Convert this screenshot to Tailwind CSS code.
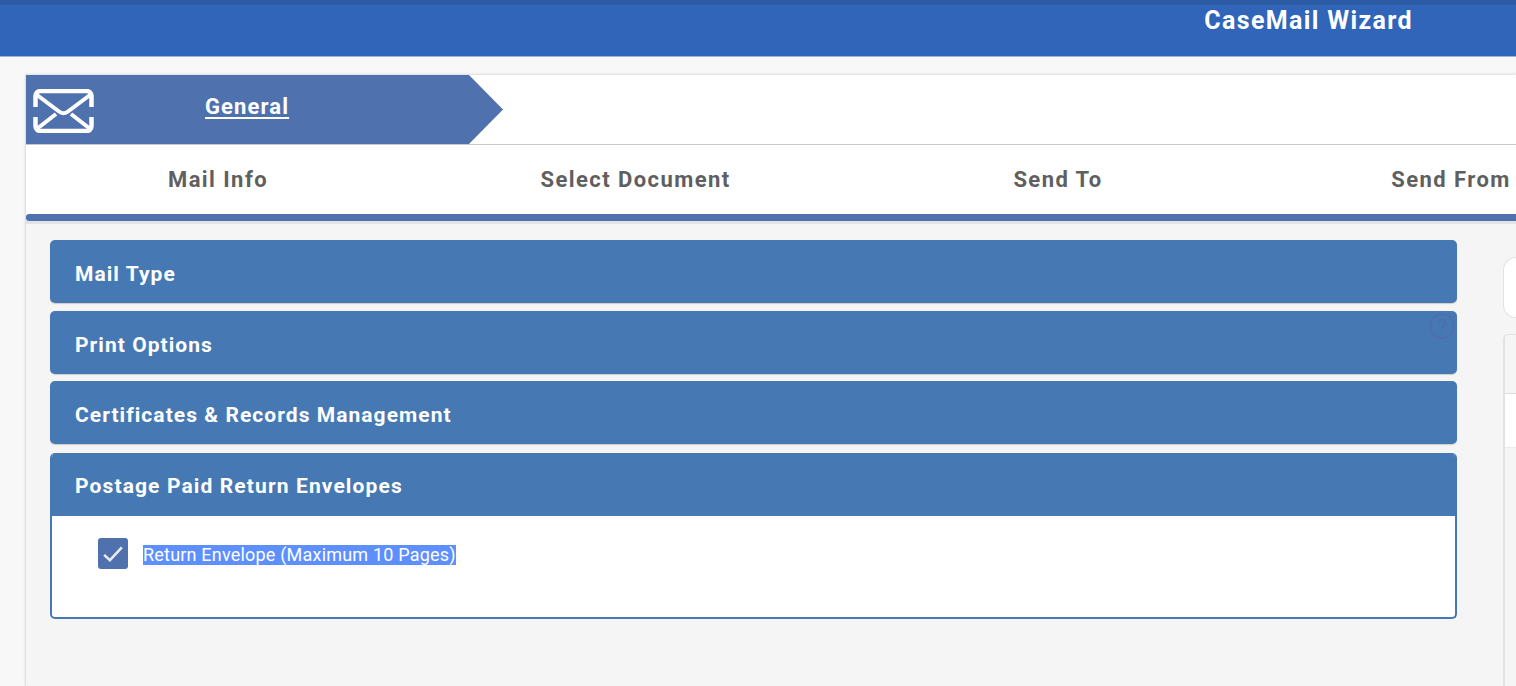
<!DOCTYPE html>
<html>
<head>
<meta charset="utf-8">
<script src="https://cdn.jsdelivr.net/npm/@tailwindcss/browser@4"></script>
</head>
<body class="h-[686px] w-[1516px] overflow-hidden bg-[#f8f8f8] font-['Roboto',sans-serif]">
<header class="h-[56px] border-t-[5px] border-[#2d5aa5] bg-[#3065ba] shadow-[0_1px_0_#9db6e0]">
  <div class="flex h-[51px] justify-end pr-[103px]">
    <span class="mt-[1px] text-[25px] leading-[30px] font-bold tracking-[1.35px] text-white">CaseMail Wizard</span>
  </div>
</header>
<main class="ml-[25px] mt-[19px] h-[611px] border-l border-[#e0e0e0] shadow-[0_-1px_2px_#dddddd]">
  <div class="h-[70px] border-b border-[#c8c8c8] bg-white">
    <div class="flex h-[69px] w-[477px] items-center bg-[#4f72ae] [clip-path:polygon(0_0,443px_0,477px_34.5px,443px_69px,0_69px)]">
      <svg class="ml-[7px] mt-[2px] h-[44px] w-[61px]" viewBox="0 0 61 44" fill="none" stroke="#fff" stroke-width="4.5">
        <path d="M2.5 18V7a5 5 0 0 1 5-5h46a5 5 0 0 1 5 5V18M2.5 28v9a5 5 0 0 0 5 5h46a5 5 0 0 0 5-5V28"/>
        <path d="M4 6 26 22.5a7 7 0 0 0 9 0L57 6M5 39 23 25M56 39 38 25" stroke-width="4"/>
      </svg>
      <a class="ml-[111px] mb-[6px] text-[22px] leading-[28px] font-bold tracking-[1.1px] text-white underline underline-offset-[3px]">General</a>
    </div>
  </div>
  <nav class="flex h-[69px] items-center overflow-hidden bg-white text-[22px] font-bold tracking-[1.43px] text-[#5f5f5f]">
    <div class="w-[384px] shrink-0 text-center">Mail Info</div>
    <div class="w-[451px] shrink-0 text-center">Select Document</div>
    <div class="w-[394px] shrink-0 text-center">Send To</div>
    <div class="w-[392px] shrink-0 text-center">Send From</div>
  </nav>
  <div class="h-[7px] rounded-l-[3px] bg-[#4f72ae]"></div>
  <section class="flex h-[465px] gap-[46px] overflow-hidden border-t-[3px] border-[#e3e3e3] bg-[#f5f5f5] pl-[24px] pt-[16px]">
    <div class="flex w-[1407px] shrink-0 flex-col">
      <div class="flex h-[63px] items-center rounded-[5px] bg-[#4679b3] pl-[25px] pt-[6px] text-[21px] font-bold tracking-[1.05px] text-white shadow-[0_1px_1px_#ccc]">Mail Type</div>
      <div class="mt-[8px] flex h-[63px] items-center rounded-[5px] bg-[#4679b3] pl-[25px] pt-[6px] text-[21px] font-bold tracking-[1.05px] text-white shadow-[0_1px_1px_#ccc]">Print Options</div>
      <div class="mt-[7px] flex h-[63px] items-center rounded-[5px] bg-[#4679b3] pl-[25px] pt-[6px] text-[21px] font-bold tracking-[1.05px] text-white shadow-[0_1px_1px_#ccc]">Certificates &amp; Records Management</div>
      <div class="mt-[9px] h-[166px] overflow-hidden rounded-[5px] border-2 border-t-0 border-[#4679b3] bg-white">
        <div class="-mx-[2px] flex h-[63px] items-center bg-[#4679b3] pl-[25px] pt-[5px] text-[21px] font-bold tracking-[1.12px] text-white">Postage Paid Return Envelopes</div>
        <label class="ml-[46px] mt-[22px] flex items-center gap-[15px]">
          <span class="flex h-[31px] w-[30px] items-center justify-center rounded-[3px] bg-[#4f72ae]">
            <svg class="h-[16px] w-[20px]" viewBox="0 0 22 18" fill="none" stroke="#e8ebf3" stroke-width="2.8"><path d="M1 10 7.5 16 21 1.5"/></svg>
          </span>
          <span class="mt-[3px] bg-[#5e8fff] text-[18px] leading-[20px] tracking-[0.2px] text-white">Return Envelope (Maximum 10 Pages)</span>
        </label>
      </div>
    </div>
    <aside class="flex min-w-0 flex-1 flex-col">
      <div class="mt-[17px] h-[61px] rounded-l-[14px] border border-r-0 border-[#e2e2e2] bg-white"></div>
      <div class="mt-[16px] flex-1 rounded-tl-[5px] border-l-2 border-t border-[#e2e2e2] bg-[#f5f5f5]">
        <div class="h-[59px] border-b border-[#dcdcdc]"></div>
        <div class="h-[54px] border-b border-[#ececec] bg-white"></div>
      </div>
    </aside>
  </section>
</main>
<svg class="absolute left-[1429px] top-[313px] h-[26px] w-[26px]" viewBox="0 0 26 26" fill="none" stroke="#4f6cae" stroke-width="1.6">
  <circle cx="13" cy="13" r="12"/>
  <path d="M9.5 10a3.5 3.5 0 1 1 5.5 3c-1.3.9-2 1.6-2 3M13 18.5v2"/>
</svg>
</body>
</html>
